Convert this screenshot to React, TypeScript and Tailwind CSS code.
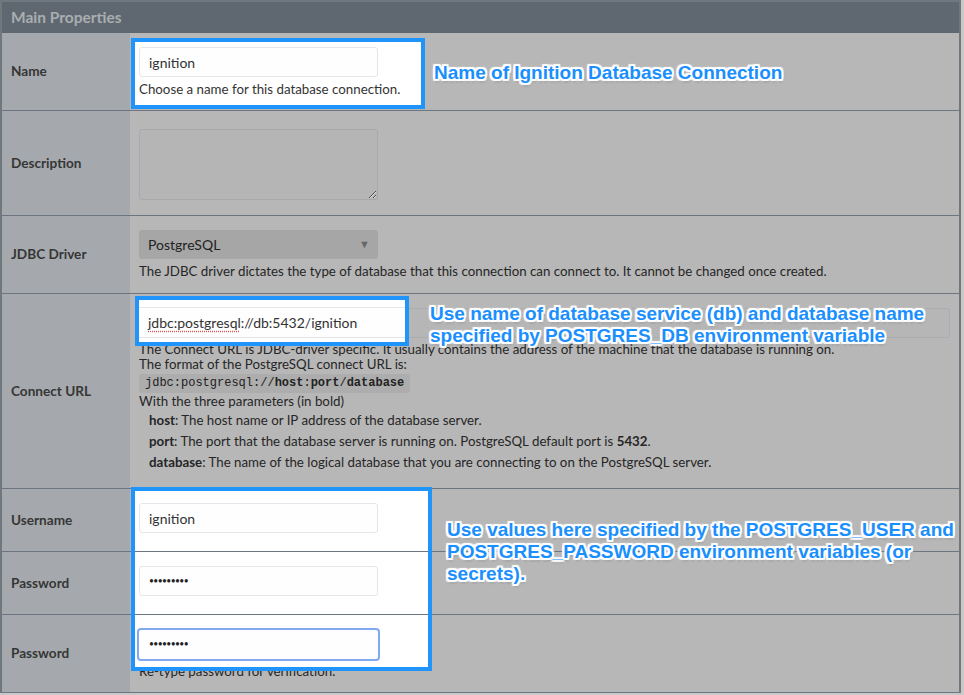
import React from "react";

const outline =
  "[text-shadow:1px_0_0_#fff,-1px_0_0_#fff,0_1px_0_#fff,0_-1px_0_#fff,2px_0_0_#fff,-2px_0_0_#fff,0_2px_0_#fff,0_-2px_0_#fff,1px_1px_0_#fff,-1px_-1px_0_#fff,1px_-1px_0_#fff,-1px_1px_0_#fff,2px_2px_1px_#fff,-2px_-2px_1px_#fff,2px_-2px_1px_#fff,-2px_2px_1px_#fff,1px_2px_3px_rgba(0,0,0,0.45)]";

const Row = ({
  label,
  h,
  children,
}: {
  label: string;
  h: string;
  children?: React.ReactNode;
}) => (
  <div className={`grid grid-cols-[128px_1fr] border-b border-[#6d7680] ${h}`}>
    <div className="flex items-center bg-[#a5a9ad] pl-[9px] text-[13.6px] font-bold text-[#363636]">
      {label}
    </div>
    <div className="pl-[9px] pt-[14px] text-[13.3px] text-[#262626]">{children}</div>
  </div>
);

const DimInput = ({ w = "w-[239px]" }: { w?: string }) => (
  <div className={`h-[30px] ${w} rounded-[3px] border border-[#a9adb0] bg-[#b6b6b6]`} />
);

const Bullets = () => (
  <span className="text-[8.5px] tracking-[-0.6px] text-[#222]">•••••••••</span>
);

export default function App() {
  return (
    <div className="relative h-[695px] w-[964px] overflow-hidden bg-[#c8c8c8] font-['Lato',sans-serif]">
      {/* dimmed form */}
      <div className="w-[961px] border-x-2 border-t-2 border-[#6f777f] bg-[#b7b7b7]">
        <div className="flex h-[31px] items-center bg-[#5f6870] pl-[9px] text-[15.5px] font-bold text-[#a9adb1]">
          Main Properties
        </div>

        <Row label="Name" h="h-[78px]">
          <DimInput />
          <div className="mt-[3px] leading-[18px]">Choose a name for this database connection.</div>
        </Row>

        <Row label="Description" h="h-[105px]">
          <textarea
            readOnly
            className="mt-[4px] block h-[71px] w-[239px] rounded-[3px] border border-[#a7a9ab] bg-[#b5b5b5] outline-none"
          />
        </Row>

        <Row label="JDBC Driver" h="h-[78px]">
          <div className="flex h-[29px] w-[239px] items-center justify-between rounded-[3px] bg-[#a6a6a6] pl-[9px] pr-[8px] text-[14px] text-[#222]">
            <span>PostgreSQL</span>
            <span className="text-[11px] text-[#666]">▼</span>
          </div>
          <div className="mt-[3px] leading-[18px]">
            The JDBC driver dictates the type of database that this connection can connect to. It cannot be
            changed once created.
          </div>
        </Row>

        <Row label="Connect URL" h="h-[195px]">
          <DimInput w="w-[811px]" />
          <div className="mt-[4px] leading-[15px]">
            The Connect URL is JDBC-driver specific. It usually contains the address of the machine that the
            database is running on.
          </div>
          <div className="leading-[15px]">The format of the PostgreSQL connect URL is:</div>
          <div className="mt-[2px] inline-block rounded-[3px] bg-[#adadad] px-[6px] font-['Liberation_Mono',monospace] text-[12px] leading-[19px] text-[#222]">
            jdbc:postgresql://<b>host</b>:<b>port</b>/<b>database</b>
          </div>
          <div className="leading-[17px]">With the three parameters (in bold)</div>
          <div className="pl-[10px] leading-[21px]">
            <div>
              <b>host</b>: The host name or IP address of the database server.
            </div>
            <div>
              <b>port</b>: The port that the database server is running on. PostgreSQL default port is{" "}
              <b>5432</b>.
            </div>
            <div>
              <b>database</b>: The name of the logical database that you are connecting to on the PostgreSQL
              server.
            </div>
          </div>
        </Row>

        <Row label="Username" h="h-[63px]">
          <DimInput />
        </Row>
        <Row label="Password" h="h-[63px]">
          <DimInput />
        </Row>
        <Row label="Password" h="h-[78px]">
          <div className="mt-[1px]">
            <DimInput />
          </div>
          <div className="mt-[2px] leading-[18px]">Re-type password for verification.</div>
        </Row>
      </div>

      {/* highlight: name */}
      <div className="absolute left-[131px] top-[38px] h-[71px] w-[294px] border-4 border-[#1f95fc] bg-white pl-[4px] pt-[5px] text-[13.3px] text-[#333]">
        <div className="flex h-[30px] w-[239px] items-center rounded-[3px] border border-[#e3e7eb] bg-[#fefefe] pl-[9px] text-[14px]">
          ignition
        </div>
        <div className="mt-[3px] leading-[18px]">Choose a name for this database connection.</div>
      </div>

      {/* highlight: connect url */}
      <div className="absolute left-[135px] top-[296px] h-[50px] w-[274px] overflow-hidden border-4 border-[#1f95fc] bg-white pt-[7px]">
        <div className="flex h-[31px] w-[300px] items-center border-y border-[#e3e7eb] bg-[#fefefe] pl-[9px] text-[14px] text-[#333]">
          <span className="underline decoration-[#e05050] decoration-dotted underline-offset-[3px]">
            jdbc:postgresql
          </span>
          ://db:5432/ignition
        </div>
      </div>

      {/* highlight: credentials */}
      <div className="absolute left-[131px] top-[487px] flex h-[184px] w-[301px] flex-col border-4 border-[#1f95fc] bg-white text-[14px] text-[#333]">
        <div className="h-[60px] pl-[4px] pt-[12px]">
          <div className="flex h-[30px] w-[239px] items-center rounded-[3px] border border-[#e3e7eb] bg-[#fefefe] pl-[9px]">
            ignition
          </div>
        </div>
        <div className="h-[63px] border-t border-[#6d7680] pl-[4px] pt-[14px]">
          <div className="flex h-[30px] w-[239px] items-center rounded-[3px] border border-[#e3e7eb] bg-[#fefefe] pl-[9px]">
            <Bullets />
          </div>
        </div>
        <div className="flex-1 border-t border-[#6d7680] pl-[2px] pt-[13px]">
          <div className="flex h-[33px] w-[243px] items-center rounded-[4px] border-2 border-[#80a9f0] bg-[#fefefe] pl-[10px]">
            <Bullets />
          </div>
        </div>
      </div>

      {/* annotations */}
      <div
        className={`absolute left-[434px] top-[62px] font-['Liberation_Sans',Arial,sans-serif] text-[19px] font-bold leading-[22px] text-[#1a8ffd] ${outline}`}
      >
        Name of Ignition Database Connection
      </div>
      <div
        className={`absolute left-[430px] top-[303px] font-['Liberation_Sans',Arial,sans-serif] text-[19px] font-bold leading-[22px] text-[#1a8ffd] ${outline}`}
      >
        Use name of database service (db) and database name
        <br />
        specified by POSTGRES_DB environment variable
      </div>
      <div
        className={`absolute left-[447px] top-[519px] font-['Liberation_Sans',Arial,sans-serif] text-[19px] font-bold leading-[22px] text-[#1a8ffd] ${outline}`}
      >
        Use values here specified by the POSTGRES_USER and
        <br />
        POSTGRES_PASSWORD environment variables (or
        <br />
        secrets).
      </div>
    </div>
  );
}
